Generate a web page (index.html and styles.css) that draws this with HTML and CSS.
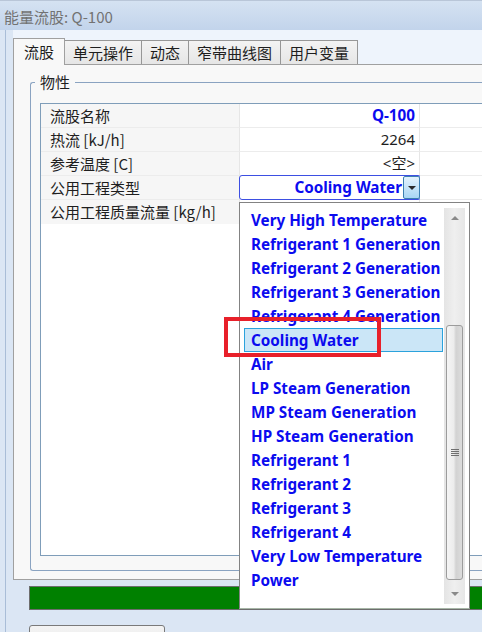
FILE: index.html
```html
<!DOCTYPE html>
<html>
<head>
<meta charset="utf-8">
<title>能量流股: Q-100</title>
<link rel="stylesheet" href="styles.css">
</head>
<body>
<div class="titlebar">能量流股: Q-100</div>
<div class="frame">
  <div class="main">
    <div class="tabstrip">
      <div class="tab active">流股</div>
      <div class="tab">单元操作</div>
      <div class="tab">动态</div>
      <div class="tab">窄带曲线图</div>
      <div class="tab">用户变量</div>
    </div>
    <div class="panel">
      <fieldset class="group">
        <legend>物性</legend>
        <div class="grid">
          <div class="row">
            <div class="label">流股名称</div>
            <div class="value strong">Q-100</div>
            <div class="extra"></div>
          </div>
          <div class="row">
            <div class="label">热流 [kJ/h]</div>
            <div class="value">2264</div>
            <div class="extra"></div>
          </div>
          <div class="row">
            <div class="label">参考温度 [C]</div>
            <div class="value">&lt;空&gt;</div>
            <div class="extra"></div>
          </div>
          <div class="row">
            <div class="label">公用工程类型</div>
            <div class="value combo-cell">
              <div class="combo">
                <span class="combo-text">Cooling Water</span>
                <span class="combo-btn"><span class="tri-down"></span></span>
              </div>
            </div>
            <div class="extra"></div>
          </div>
          <div class="row last">
            <div class="label">公用工程质量流量 [kg/h]</div>
            <div class="value"></div>
            <div class="extra"></div>
          </div>
        </div>
      </fieldset>
    </div>
    <div class="progress"></div>
    <div class="button"></div>
  </div>
</div>

<div class="dropdown">
  <ul class="items">
    <li>Very High Temperature</li>
    <li>Refrigerant 1 Generation</li>
    <li>Refrigerant 2 Generation</li>
    <li>Refrigerant 3 Generation</li>
    <li>Refrigerant 4 Generation</li>
    <li class="selected">Cooling Water</li>
    <li>Air</li>
    <li>LP Steam Generation</li>
    <li>MP Steam Generation</li>
    <li>HP Steam Generation</li>
    <li>Refrigerant 1</li>
    <li>Refrigerant 2</li>
    <li>Refrigerant 3</li>
    <li>Refrigerant 4</li>
    <li>Very Low Temperature</li>
    <li>Power</li>
  </ul>
  <div class="scrollbar">
    <div class="arrow"><span class="tri-up"></span></div>
    <div class="track">
      <div class="thumb"><span class="grip"></span></div>
    </div>
    <div class="arrow"><span class="tri-small-down"></span></div>
  </div>
</div>

<div class="mark"></div>
</body>
</html>
```

FILE: styles.css
```css
html, body {
  margin: 0;
  padding: 0;
  overflow: hidden;
}
body {
  width: 482px;
  height: 632px;
  position: relative;
  background: #dbe6f4;
  font-family: "Noto Sans", "Noto Sans CJK SC", sans-serif;
  color: #1e1e1e;
}

.titlebar {
  height: 30px;
  box-sizing: border-box;
  border-top: 1px solid #b9c6d8;
  padding-left: 4px;
  line-height: 31px;
  font-size: 15px;
  color: #727272;
  background: linear-gradient(#d5e2f2, #c2d4eb);
  font-family: "Noto Sans CJK SC", sans-serif;
}

.frame {
  height: 602px;
  padding-left: 13px;
  background: linear-gradient(to right, transparent 5px, #a9bdd7 5px, #a9bdd7 6px, transparent 6px);
}

.main {
  width: 469px;
}

.tabstrip {
  height: 34px;
  background: #eef4fc;
  display: flex;
  align-items: flex-end;
}

.tab {
  height: 24px;
  box-sizing: border-box;
  padding: 0 8px;
  border: 1px solid #979797;
  border-bottom: none;
  margin-left: -1px;
  line-height: 23px;
  font-size: 15px;
  font-family: "Noto Sans CJK SC", sans-serif;
  background: linear-gradient(#f3f3f3, #e6e6e6);
}

.tab.active {
  height: 27px;
  margin-left: 0;
  margin-bottom: -1px;
  padding: 0 10px;
  line-height: 26px;
  background: #f8f8f8;
  border-color: #a0a0a0;
  position: relative;
  z-index: 1;
}

.panel {
  height: 516px;
  box-sizing: border-box;
  border: 1px solid #a0a0a0;
  border-right: none;
  background: #f8f8f8;
  padding: 7px 0 0 16px;
}

.group {
  margin: 0;
  border: 1px solid #8aa3c1;
  border-right: none;
  border-radius: 3px 0 0 3px;
  padding: 11px 0 14px 9px;
}

.group legend {
  margin-left: -5px;
  padding: 0 5px;
  font-size: 15px;
  line-height: 20px;
  font-family: "Noto Sans CJK SC", sans-serif;
}

.grid {
  height: 453px;
  box-sizing: border-box;
  border: 1px solid #7f9db9;
  border-right: none;
  background: #fff;
}

.row {
  display: grid;
  grid-template-columns: 198px 181px 1fr;
  height: 24px;
  box-sizing: border-box;
}

.row > div {
  border-bottom: 1px solid #ececec;
  box-sizing: border-box;
  height: 24px;
}

.row.last > div {
  border-bottom: none;
}

.label {
  background: #f6f6f6;
  padding-left: 9px;
  font-size: 15px;
  line-height: 23px;
  font-family: "Noto Sans CJK SC", sans-serif;
  white-space: nowrap;
}

.value {
  border-left: 1px solid #e6e6e6;
  border-right: 1px solid #e6e6e6;
  text-align: right;
  padding-right: 4px;
  font-size: 15px;
  line-height: 23px;
  font-family: "Noto Sans", "Noto Sans CJK SC", sans-serif;
}

.value.strong {
  font-weight: bold;
  font-size: 15.25px;
  color: #0b0bef;
}

.value.combo-cell {
  padding: 0;
  border-bottom: none !important;
}

.combo {
  height: 25px;
  margin: -1px -2px 0 -1px;
  box-sizing: border-box;
  border: 1px solid #3d4fe2;
  border-radius: 3px;
  background: #fff;
  display: flex;
  align-items: stretch;
}

.combo-text {
  flex: 1;
  text-align: right;
  padding-right: 1px;
  font-weight: bold;
  color: #0b0bef;
  font-size: 15.25px;
  line-height: 22px;
}

.combo-btn {
  width: 17px;
  box-sizing: border-box;
  border: 1px solid #3c7fb1;
  border-radius: 2px;
  background: linear-gradient(#e3f2fc, #a9d6f4);
  display: flex;
  align-items: center;
  justify-content: center;
}

.tri-down {
  width: 0;
  height: 0;
  border-left: 4px solid transparent;
  border-right: 4px solid transparent;
  border-top: 4px solid #2a2a2a;
}

.extra {
  background: #fff;
}

.progress {
  margin: 6px 0 0 16px;
  height: 24px;
  box-sizing: border-box;
  border: 1px solid #6d6d6d;
  border-right: none;
  background: #008000;
}

.button {
  margin: 15px 0 0 16px;
  width: 136px;
  height: 24px;
  box-sizing: border-box;
  border: 1px solid #7a7a7a;
  border-radius: 3px;
  background: linear-gradient(#f4f4f4, #e8e8e8);
}

/* dropdown list overlay */
.dropdown {
  position: absolute;
  left: 239px;
  top: 202px;
  width: 231px;
  height: 407px;
  box-sizing: border-box;
  border: 1px solid #838383;
  border-bottom-color: #a7b6a7;
  background: #fff;
  display: flex;
  padding: 5px 4px 4px 4px;
}

.items {
  list-style: none;
  margin: 0;
  padding: 0;
  width: 199px;
}

.items li {
  height: 24px;
  box-sizing: border-box;
  border: 1px solid transparent;
  padding-left: 6px;
  line-height: 22px;
  font-size: 15.25px;
  font-weight: bold;
  color: #0b0bef;
  white-space: nowrap;
}

.items li.selected {
  background: #cbe6f7;
  border-color: #2ba2dc;
}

.scrollbar {
  width: 21px;
  margin-left: 1px;
  display: flex;
  flex-direction: column;
  background: linear-gradient(to right, #e4e4e4, #efefef 50%, #e6e6e6);
  height: 396px;
}

.arrow {
  height: 20px;
  display: flex;
  align-items: center;
  justify-content: center;
}

.tri-up {
  width: 0;
  height: 0;
  border-left: 4px solid transparent;
  border-right: 4px solid transparent;
  border-bottom: 4px solid #8a8a8a;
}

.tri-small-down {
  width: 0;
  height: 0;
  border-left: 4px solid transparent;
  border-right: 4px solid transparent;
  border-top: 4px solid #8a8a8a;
}

.track {
  flex: 1;
  padding: 0 2px;
}

.thumb {
  margin-top: 97px;
  height: 255px;
  box-sizing: border-box;
  border: 1px solid #9c9c9c;
  border-radius: 3px;
  background: linear-gradient(to right, #f5f5f5, #ececec 45%, #d2d2d2 60%, #dcdcdc);
  display: flex;
  align-items: center;
  justify-content: center;
}

.grip {
  width: 8px;
  height: 8px;
  background: repeating-linear-gradient(#6f6f6f 0 1px, transparent 1px 2px);
}

/* red annotation rectangle */
.mark {
  position: absolute;
  left: 224px;
  top: 317px;
  width: 157px;
  height: 40px;
  box-sizing: border-box;
  border: 4px solid #e8202a;
}
```
